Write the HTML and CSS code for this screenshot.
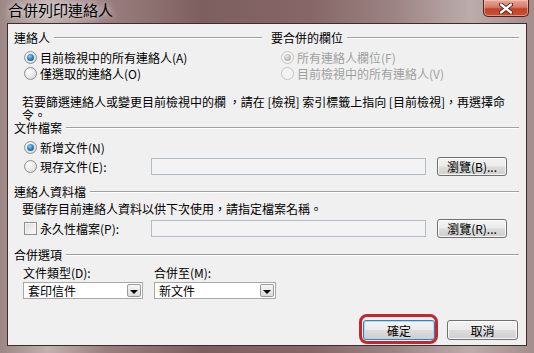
FILE: index.html
```html
<!DOCTYPE html>
<html lang="zh-Hant">
<head>
  <meta charset="UTF-8">
  <title>合併列印連絡人</title>
  <link rel="stylesheet" href="styles.css">
</head>
<body>

<div class="window">
  <div class="titlebar">
    <span class="title">合併列印連絡人</span>
    <span class="close">
      <svg width="14" height="11" viewBox="0 0 14 11">
        <path d="M2 1.5 L12 9.5 M12 1.5 L2 9.5" stroke="#3a1a14" stroke-width="4" stroke-linecap="round"/>
        <path d="M2 1.5 L12 9.5 M12 1.5 L2 9.5" stroke="#fff" stroke-width="2.4" stroke-linecap="round"/>
      </svg>
    </span>
  </div>

  <div class="client">
    <div class="top-groups">
      <div class="group">
        <div class="group-head"><span>連絡人</span><i class="rule"></i></div>
        <div class="opt first"><span class="radio on"></span>目前檢視中的所有連絡人(A)</div>
        <div class="opt"><span class="radio"></span>僅選取的連絡人(O)</div>
      </div>
      <div class="group">
        <div class="group-head"><span>要合併的欄位</span><i class="rule"></i></div>
        <div class="opt first disabled"><span class="radio on"></span>所有連絡人欄位(F)</div>
        <div class="opt disabled"><span class="radio"></span>目前檢視中的所有連絡人(V)</div>
      </div>
    </div>

    <p class="note">若要篩選連絡人或變更目前檢視中的欄 ，請在 [檢視] 索引標籤上指向 [目前檢視]，再選擇命<br>令。</p>

    <div class="group-head doc-head"><span>文件檔案</span><i class="rule"></i></div>
    <div class="opt first"><span class="radio on"></span>新增文件(N)</div>
    <div class="file-row">
      <div class="file-label"><span class="radio"></span>現存文件(E):</div>
      <div class="textbox"></div>
      <button class="btn">瀏覽(B)...</button>
    </div>

    <div class="group-head data-head"><span>連絡人資料檔</span><i class="rule"></i></div>
    <p class="hint">要儲存目前連絡人資料以供下次使用，請指定檔案名稱。</p>
    <div class="file-row save-row">
      <div class="file-label"><span class="check"></span>永久性檔案(P):</div>
      <div class="textbox"></div>
      <button class="btn">瀏覽(R)...</button>
    </div>

    <div class="group-head merge-head"><span>合併選項</span><i class="rule"></i></div>
    <div class="merge-opts">
      <div class="field">
        <span class="field-label">文件類型(D):</span>
        <div class="select"><span>套印信件</span><i class="arrow"></i></div>
      </div>
      <div class="field wide">
        <span class="field-label">合併至(M):</span>
        <div class="select"><span>新文件</span><i class="arrow"></i></div>
      </div>
    </div>

    <div class="actions">
      <button class="btn ok">確定</button>
      <button class="btn cancel">取消</button>
    </div>
  </div>
</div>

</body>
</html>
```

FILE: styles.css
```css
* {
  box-sizing: border-box;
}
body {
  margin: 0;
  width: 534px;
  height: 353px;
  overflow: hidden;
  font-family: "Noto Sans CJK TC", "Noto Sans", sans-serif;
  font-size: 12px;
  color: #000;
}
.window {
  height: 353px;
  padding: 0 7px 7px;
  display: flex;
  flex-direction: column;
  background: linear-gradient(90deg, #9c8686 0%, #c0b1b1 9%, #9a7e7e 20%, #7e5f5f 38%, #866666 58%, #9d8484 74%, #bcacac 88%, #a38d8d 100%);
}
.titlebar {
  height: 23px;
  display: flex;
  justify-content: space-between;
  align-items: flex-start;
}
.title {
  font-size: 15px;
  line-height: 20px;
  padding-left: 1px;
  text-shadow: 0 0 6px rgba(255, 255, 255, 0.7), 0 0 10px rgba(255, 255, 255, 0.5);
}
.close {
  width: 46px;
  height: 17px;
  margin-right: -2px;
  display: flex;
  justify-content: center;
  align-items: center;
  border: 1px solid #4a2520;
  border-top: none;
  border-radius: 0 0 5px 5px;
  background: linear-gradient(#e9a99b 0%, #d77a66 45%, #c2432a 55%, #c9502f 100%);
  box-shadow: inset 0 0 0 1px rgba(255, 210, 200, 0.5);
}
.client {
  flex: 1;
  border: 1px solid #3e2d2d;
  background: #f0f0f0;
  padding: 7px 7px 0 6px;
}

/* group headings with etched rule */
.group-head {
  display: flex;
  align-items: center;
  gap: 4px;
  height: 14px;
  line-height: 14px;
}
.rule {
  flex: 1;
  height: 2px;
  border-top: 1px solid #a0a0a0;
  border-bottom: 1px solid #fff;
}
.top-groups {
  display: grid;
  grid-template-columns: 248px 248px;
  gap: 9px;
}
.opt {
  display: flex;
  align-items: center;
  gap: 3px;
  height: 16px;
  padding-left: 10px;
  white-space: nowrap;
}
.opt.first {
  margin-top: 4px;
}
.opt.disabled {
  color: #a0a0a0;
}
.radio {
  width: 13px;
  height: 13px;
  border-radius: 50%;
  border: 1px solid #8e8f8f;
  background: radial-gradient(circle at 40% 35%, #fff 0%, #e6e6e6 55%, #cfcfcf 100%);
  display: flex;
  justify-content: center;
  align-items: center;
  flex: none;
}
.radio.on::after {
  content: "";
  width: 7px;
  height: 7px;
  border-radius: 50%;
  background: radial-gradient(circle at 40% 35%, #8fd0f5 0%, #2c7fc0 50%, #0f4a84 100%);
}
.disabled .radio {
  border-color: #c4c4c4;
  background: #f4f4f4;
}
.disabled .radio.on::after {
  background: radial-gradient(circle at 40% 35%, #e8e8e8 0%, #b9b9b9 60%, #a6a6a6 100%);
}
.check {
  width: 13px;
  height: 13px;
  border: 1px solid #8e8f8f;
  background: linear-gradient(135deg, #dcdcdc, #fbfbfb);
  box-shadow: inset 0 0 0 1px #f4f4f4;
  flex: none;
}

.note {
  margin: 14px 0 0;
  padding-left: 8px;
  line-height: 13px;
  white-space: nowrap;
}
.file-row {
  display: flex;
  align-items: center;
  height: 21px;
  margin-top: 1px;
}
.file-label {
  width: 137px;
  display: flex;
  align-items: center;
  gap: 3px;
  padding-left: 10px;
  white-space: nowrap;
}
.textbox {
  width: 275px;
  height: 17px;
  border: 1px solid #b3bcc4;
  background: #f3f3f3;
}
.btn {
  font-family: inherit;
  font-size: 12px;
  color: #000;
  padding: 0;
  height: 19px;
  border: 1px solid #707070;
  border-radius: 3px;
  background: linear-gradient(#f4f4f4 0%, #ebebeb 48%, #dcdcdc 52%, #cfcfcf 100%);
  box-shadow: inset 0 0 0 1px rgba(255, 255, 255, 0.8);
}
.file-row .btn {
  width: 70px;
  margin-left: 11px;
}
.data-head {
  margin-top: 8px;
}
.hint {
  margin: 4px 0 0;
  padding-left: 8px;
  line-height: 12px;
}
.save-row {
  margin-top: 3px;
}
.merge-head {
  margin-top: 9px;
}
.merge-opts {
  display: flex;
  gap: 11px;
  padding-left: 9px;
  margin-top: 5px;
}
.field {
  width: 120px;
  display: flex;
  flex-direction: column;
  gap: 3px;
}
.field.wide {
  width: 122px;
}
.field-label {
  line-height: 12px;
}
.select {
  height: 17px;
  border: 1px solid #a8a8a8;
  background: #fff;
  display: flex;
  align-items: center;
  justify-content: space-between;
  padding: 0 1px 0 4px;
}
.arrow {
  width: 14px;
  height: 13px;
  border: 1px solid #9a9a9a;
  border-radius: 2px;
  background: linear-gradient(#f6f6f6, #dcdcdc);
  display: flex;
  justify-content: center;
  align-items: center;
}
.arrow::after {
  content: "";
  border-left: 4px solid transparent;
  border-right: 4px solid transparent;
  border-top: 4px solid #000;
  margin-top: 2px;
}

.actions {
  display: flex;
  justify-content: flex-end;
  gap: 12px;
  margin-top: 21px;
  margin-right: 1px;
}
.actions .btn {
  height: 20px;
  width: 71px;
}
.actions .ok {
  width: 72px;
  position: relative;
  border-color: #3c7fb1;
  box-shadow: inset 0 0 0 1px #a6dcf6;
}
/* red annotation ring over the OK button */
.actions .ok::after {
  content: "";
  position: absolute;
  top: -7px;
  bottom: -5px;
  left: -5px;
  right: -4px;
  border: 3px solid #c6262e;
  border-radius: 8px;
}
```
